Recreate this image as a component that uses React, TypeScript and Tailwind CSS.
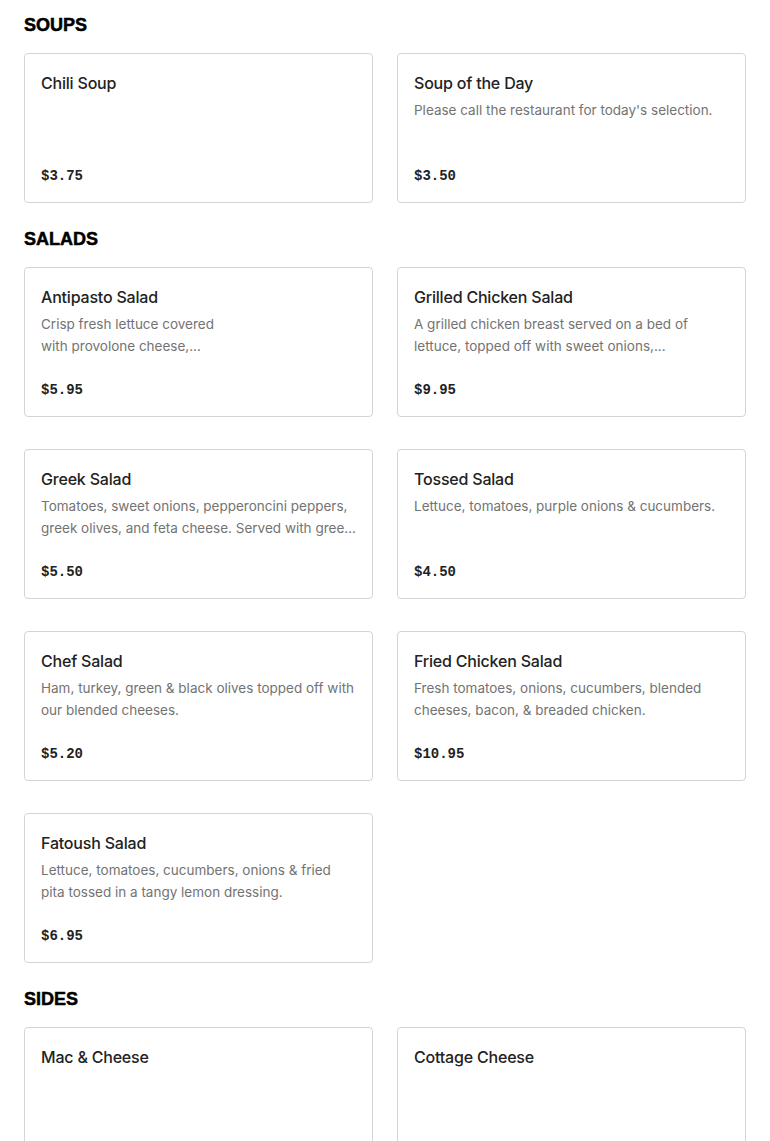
type Item = {
  name: string;
  desc?: React.ReactNode;
  price: string;
};

const sections: { title: string; items: Item[]; faded?: boolean }[] = [
  {
    title: 'SOUPS',
    items: [
      { name: 'Chili Soup', price: '$3.75' },
      {
        name: 'Soup of the Day',
        desc: "Please call the restaurant for today's selection.",
        price: '$3.50',
      },
    ],
  },
  {
    title: 'SALADS',
    items: [
      {
        name: 'Antipasto Salad',
        desc: (
          <>
            Crisp fresh lettuce covered
            <br />
            with provolone cheese,...
          </>
        ),
        price: '$5.95',
      },
      {
        name: 'Grilled Chicken Salad',
        desc: 'A grilled chicken breast served on a bed of lettuce, topped off with sweet onions,...',
        price: '$9.95',
      },
      {
        name: 'Greek Salad',
        desc: 'Tomatoes, sweet onions, pepperoncini peppers, greek olives, and feta cheese. Served with greek dressing.',
        price: '$5.50',
      },
      {
        name: 'Tossed Salad',
        desc: 'Lettuce, tomatoes, purple onions & cucumbers.',
        price: '$4.50',
      },
      {
        name: 'Chef Salad',
        desc: 'Ham, turkey, green & black olives topped off with our blended cheeses.',
        price: '$5.20',
      },
      {
        name: 'Fried Chicken Salad',
        desc: 'Fresh tomatoes, onions, cucumbers, blended cheeses, bacon, & breaded chicken.',
        price: '$10.95',
      },
      {
        name: 'Fatoush Salad',
        desc: 'Lettuce, tomatoes, cucumbers, onions & fried pita tossed in a tangy lemon dressing.',
        price: '$6.95',
      },
    ],
  },
  {
    title: 'SIDES',
    faded: true,
    items: [
      { name: 'Mac & Cheese', price: '$3.25' },
      { name: 'Cottage Cheese', price: '$2.50' },
    ],
  },
];

function MenuCard({ item, faded }: { item: Item; faded?: boolean }) {
  return (
    <div className="flex h-[150px] flex-col rounded-[4px] border border-[#d4d4d4] bg-white px-4 pt-[15px] pb-[16px]">
      <div className="text-[16px] leading-7 font-medium tracking-[-0.2px] text-[#222]">{item.name}</div>
      {item.desc && (
        <p className="mt-[2px] line-clamp-2 text-[13.5px] leading-[22px] text-[#737373]">{item.desc}</p>
      )}
      <div
        className={
          'mt-auto font-["Liberation_Mono",monospace] text-[14px] leading-5 font-bold ' +
          (faded ? 'text-[#f2f2f2]' : 'text-[#222]')
        }
      >
        {item.price}
      </div>
    </div>
  );
}

export default function App() {
  return (
    <div className="min-h-screen bg-white px-6 pt-[11px] font-['Inter',sans-serif]">
      {sections.map((section) => (
        <section key={section.title} className="mb-[22px]">
          <h2 className="mb-[14px] font-['Liberation_Sans',sans-serif] text-lg leading-7 font-black text-black [-webkit-text-stroke:0.5px_black]">
            {section.title}
          </h2>
          <div className="grid grid-cols-2 gap-x-6 gap-y-8">
            {section.items.map((item) => (
              <MenuCard key={item.name} item={item} faded={section.faded} />
            ))}
          </div>
        </section>
      ))}
    </div>
  );
}
